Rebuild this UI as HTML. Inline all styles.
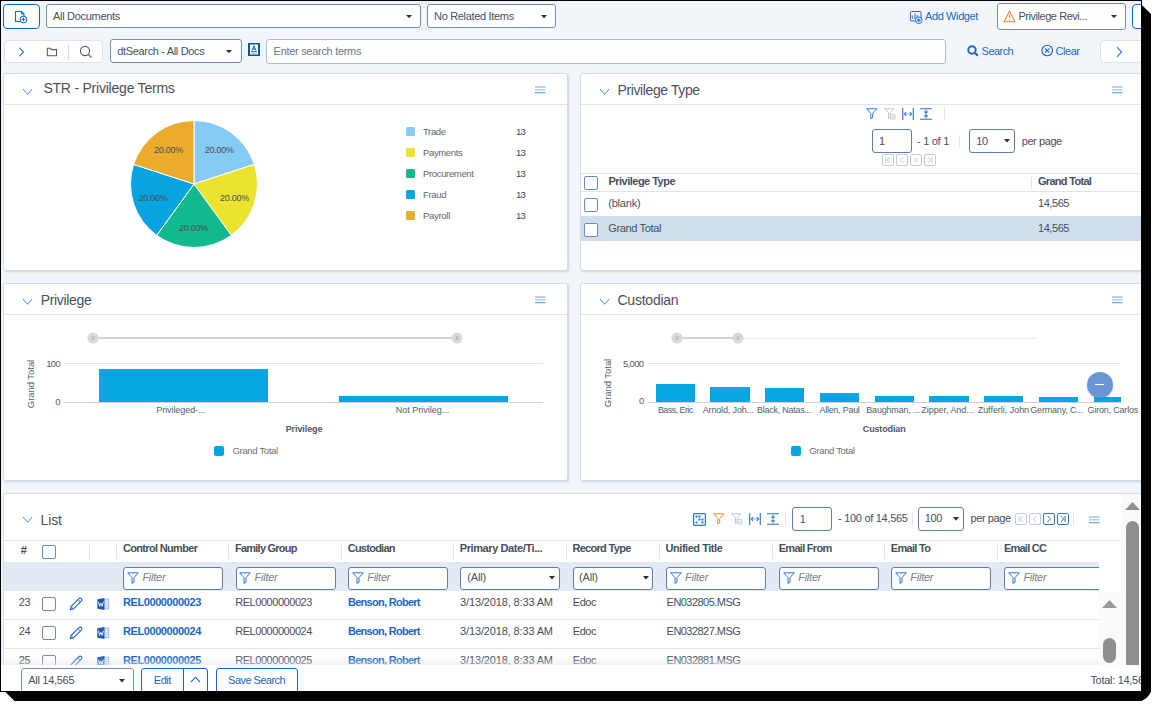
<!DOCTYPE html>
<html><head><meta charset="utf-8">
<style>
*{box-sizing:border-box;margin:0;padding:0}
html,body{width:1157px;height:707px;overflow:hidden;background:#fff}
body{position:relative;font-family:"Liberation Sans",sans-serif;color:#3d4654}
.a{position:absolute}
.t{position:absolute;white-space:nowrap;line-height:1}
#shadow{position:absolute;left:0;top:0;width:1157px;height:707px;background:#000;clip-path:polygon(1141.00px 5.50px,1142.50px 5.50px,1151.00px 14.00px,1151.00px 691.50px,1150.46px 692.51px,1149.81px 693.75px,1149.03px 694.94px,1148.15px 696.09px,1147.16px 697.16px,1146.09px 698.15px,1144.94px 699.03px,1143.75px 699.81px,1142.51px 700.46px,1141.50px 701.00px,14.50px 701.00px,5.50px 692.00px,5.50px 5.50px)}
#frame{position:absolute;left:0;top:0;width:1142px;height:692px;background:#000}
#app{position:absolute;left:0;top:0;width:1141px;height:691px;overflow:hidden;background:#f2f6fa}
.bt{position:absolute;left:0;top:0;width:1142px;height:1px;background:#000;z-index:50}
.bl{position:absolute;left:0;top:0;width:1px;height:692px;background:#000;z-index:50}
.sel{position:absolute;background:#fff;border:1px solid #7090bb;border-radius:3px}
.arr{position:absolute;width:0;height:0;border-left:3.5px solid transparent;border-right:3.5px solid transparent;border-top:4px solid #2b2f36}
.panel{position:absolute;background:#fff;border:1px solid #d3dde9;border-radius:3px;box-shadow:1px 1px 2px rgba(120,140,165,.35)}
.hl{position:absolute;height:1px;background:#dde6f0}
.vl{position:absolute;width:1px;background:#dde6f0}
.cb{position:absolute;width:14px;height:14px;border:1px solid #6a8cc0;border-radius:2px;background:#fff}
.inp{position:absolute;background:#fff;border:1px solid #5f7ea8;border-radius:3px}
.pg{position:absolute;width:12px;height:12px;border:1px solid #bccce0;border-radius:2px;background:#fff}
.pga{border-color:#2f7ad8}
</style></head><body>
<div id="shadow"></div>
<div id="frame"></div>
<div class="bt"></div><div class="bl"></div>
<div id="app">
<div class="a" style="left:3px;top:4px;width:37px;height:25px;border:1px solid #1266d6;border-radius:4px;background:#fff"></div>
<svg class="a" style="left:14px;top:10px" width="14" height="14" viewBox="0 0 14 14">
 <path d="M7.5 11.5H1.5V1.5H7.5L10 4V6" fill="none" stroke="#1769d6" stroke-width="1.1"/>
 <path d="M7.5 1.5V4H10" fill="none" stroke="#1769d6" stroke-width="1"/>
 <circle cx="9.5" cy="9.5" r="3.2" fill="#fff" stroke="#1769d6" stroke-width="1.1"/>
 <path d="M9.5 7.8V11.2M7.8 9.5H11.2" stroke="#1769d6" stroke-width="1.1"/>
</svg>
<div class="sel" style="left:46px;top:4px;width:375px;height:24px"></div>
<div class="t" style="left:53.00px;top:11.29px;font-size:11px;letter-spacing:-0.301px;color:#47505b">All Documents</div>
<svg class="a" style="left:406px;top:15px" width="6" height="3.2" viewBox="0 0 6 3.2"><path d="M0 0H6L3.0 3.2Z" fill="#2b2f36"/></svg>
<div class="sel" style="left:427px;top:4px;width:129px;height:24px"></div>
<div class="t" style="left:434.00px;top:11.29px;font-size:11px;letter-spacing:-0.318px;color:#47505b">No Related Items</div>
<svg class="a" style="left:541px;top:15px" width="6" height="3.2" viewBox="0 0 6 3.2"><path d="M0 0H6L3.0 3.2Z" fill="#2b2f36"/></svg>
<svg class="a" style="left:909px;top:10px" width="14" height="14" viewBox="0 0 14 14">
 <rect x="1.5" y="1.5" width="10.5" height="9.5" rx="1" fill="none" stroke="#1f6ad6" stroke-width="1"/>
 <path d="M3.6 9V5.6M6 9V3.6M8.4 9V5" stroke="#6f9fe3" stroke-width="1.6"/>
 <circle cx="9.8" cy="10.2" r="3.3" fill="#f2f6fa" stroke="#1f6ad6" stroke-width="1"/>
 <path d="M9.8 8.4V12M8 10.2H11.6" stroke="#1f6ad6" stroke-width="1.2"/>
</svg>
<div class="t" style="left:925.00px;top:11.29px;font-size:11px;letter-spacing:-0.386px;color:#1a66cc">Add Widget</div>
<div class="sel" style="left:997px;top:3px;width:129px;height:27px"></div>
<svg class="a" style="left:1003px;top:9.5px" width="13" height="13" viewBox="0 0 13 13">
 <path d="M6.5 1.2L12 11.8H1Z" fill="none" stroke="#e88a30" stroke-width="1.1" stroke-linejoin="round"/>
 <path d="M6.5 4.8V8.2M6.5 9.4V10.4" stroke="#e88a30" stroke-width="1.1"/>
</svg>
<div class="t" style="left:1018.40px;top:11.29px;font-size:11px;letter-spacing:-0.448px;color:#47505b">Privilege Revi...</div>
<svg class="a" style="left:1111px;top:15px" width="6" height="3.2" viewBox="0 0 6 3.2"><path d="M0 0H6L3.0 3.2Z" fill="#2b2f36"/></svg>
<div class="a" style="left:1132px;top:4px;width:30px;height:25px;border:1px solid #1266d6;border-radius:4px;background:#fff"></div>
<div class="a" style="left:4px;top:40px;width:99px;height:23px;border:1px solid #dbe4ee;border-radius:4px;background:#fff"></div>
<svg class="a" style="left:16px;top:45px" width="12" height="14" viewBox="0 0 12 14"><path d="M3.2 2.6L7.6 7L3.2 11.4" fill="none" stroke="#2f7ad8" stroke-width="1.1"/></svg>
<svg class="a" style="left:46px;top:46px" width="12" height="11" viewBox="0 0 12 11">
 <path d="M1.3 2.2H4.3L5.6 3.6H10.5V9.8H1.3Z" fill="none" stroke="#555b63" stroke-width="1.05" stroke-linejoin="round"/></svg>
<div class="a" style="left:68px;top:45px;width:1px;height:15px;background:#d5dde6"></div>
<svg class="a" style="left:79px;top:45px" width="14" height="14" viewBox="0 0 14 14">
 <circle cx="6" cy="6" r="4.6" fill="none" stroke="#555b63" stroke-width="1.1"/>
 <path d="M9.3 9.3L12.5 12.5" stroke="#555b63" stroke-width="1.1"/></svg>
<div class="sel" style="left:110px;top:39px;width:132px;height:24px"></div>
<div class="t" style="left:117.30px;top:46.29px;font-size:11px;letter-spacing:-0.339px;color:#47505b">dtSearch - All Docs</div>
<svg class="a" style="left:226px;top:50px" width="6" height="3.2" viewBox="0 0 6 3.2"><path d="M0 0H6L3.0 3.2Z" fill="#2b2f36"/></svg>
<svg class="a" style="left:248px;top:43px" width="12" height="13" viewBox="0 0 12 13">
 <rect x="0" y="0" width="12" height="13" fill="#0e5a95"/>
 <rect x="2" y="1.5" width="8" height="10" fill="#fff"/>
 <path d="M4 7.5L6 2.8L8 7.5M4.7 6H7.3" fill="none" stroke="#0e5a95" stroke-width="1"/>
 <path d="M3.2 8.6H8.8" stroke="#0e5a95" stroke-width="0.9"/>
 <path d="M3.2 10.3H8.8" stroke="#8fb0cc" stroke-width="0.9"/></svg>
<div class="a" style="left:266px;top:39px;width:680px;height:25px;border:1px solid #a9bdd4;border-radius:3px;background:#fff"></div>
<div class="t" style="left:273.60px;top:46.29px;font-size:11px;letter-spacing:-0.296px;color:#6f757c">Enter search terms</div>
<svg class="a" style="left:967px;top:45px" width="12" height="12" viewBox="0 0 12 12">
 <circle cx="5" cy="5" r="3.7" fill="none" stroke="#1a66cc" stroke-width="2"/>
 <path d="M7.5 7.5L10.8 10.8" stroke="#1a66cc" stroke-width="2.2"/></svg>
<div class="t" style="left:981.60px;top:46.29px;font-size:11px;letter-spacing:-0.542px;color:#1a66cc">Search</div>
<svg class="a" style="left:1041px;top:44px" width="13" height="13" viewBox="0 0 13 13">
 <circle cx="6.2" cy="6.5" r="5.3" fill="none" stroke="#1a66cc" stroke-width="1.1"/>
 <path d="M4 4.3L8.4 8.7M8.4 4.3L4 8.7" stroke="#1a66cc" stroke-width="1.1"/></svg>
<div class="t" style="left:1055.50px;top:46.29px;font-size:11px;letter-spacing:-0.457px;color:#1a66cc">Clear</div>
<div class="a" style="left:1100px;top:40px;width:60px;height:23px;border:1px solid #dbe4ee;border-radius:4px;background:#fff"></div>
<svg class="a" style="left:1114px;top:45px" width="10" height="14" viewBox="0 0 10 14"><path d="M3 2.2L7.6 7L3 11.8" fill="none" stroke="#2f7ad8" stroke-width="1.1"/></svg>
<div class="panel" style="left:3px;top:73px;width:565px;height:198px"></div>
<div class="hl" style="left:4px;top:104px;width:563px"></div>
<svg class="a" style="left:22px;top:87.7px" width="11.2" height="7.3" viewBox="0 0 11.2 7.3"><path d="M1 1L5.6 6.3L10.2 1" fill="none" stroke="#3a8ae0" stroke-width="1"/></svg>
<div class="t" style="left:43.40px;top:80.95px;font-size:14px;letter-spacing:-0.221px;color:#4a515c">STR - Privilege Terms</div>
<svg class="a" style="left:535px;top:86px" width="10.5" height="9" viewBox="0 0 10.5 9"><path d="M0 1H10.5M0 6.6H10.5" stroke="#74a8df" stroke-width="1.2"/><path d="M0 3.8H10.5" stroke="#74a8df" stroke-opacity="0.7" stroke-width="1.2"/></svg>
<svg class="a" style="left:0;top:0" width="600" height="300" viewBox="0 0 600 300"><path d="M194 184L194.00 120.50A63.5 63.5 0 0 1 254.39 164.38Z" fill="#86cbf3" stroke="#fff" stroke-width="1"/><path d="M194 184L254.39 164.38A63.5 63.5 0 0 1 231.32 235.37Z" fill="#ebe32f" stroke="#fff" stroke-width="1"/><path d="M194 184L231.32 235.37A63.5 63.5 0 0 1 156.68 235.37Z" fill="#12b98d" stroke="#fff" stroke-width="1"/><path d="M194 184L156.68 235.37A63.5 63.5 0 0 1 133.61 164.38Z" fill="#08a3e1" stroke="#fff" stroke-width="1"/><path d="M194 184L133.61 164.38A63.5 63.5 0 0 1 194.00 120.50Z" fill="#ebab2d" stroke="#fff" stroke-width="1"/></svg>
<div class="t" style="left:204.70px;top:146.08px;font-size:9px;letter-spacing:-0.254px;color:#4a4f57">20.00%</div>
<div class="t" style="left:220.10px;top:194.18px;font-size:9px;letter-spacing:-0.254px;color:#4a4f57">20.00%</div>
<div class="t" style="left:179.10px;top:223.88px;font-size:9px;letter-spacing:-0.254px;color:#4a4f57">20.00%</div>
<div class="t" style="left:138.50px;top:194.18px;font-size:9px;letter-spacing:-0.254px;color:#4a4f57">20.00%</div>
<div class="t" style="left:153.90px;top:146.08px;font-size:9px;letter-spacing:-0.254px;color:#4a4f57">20.00%</div>
<div class="a" style="left:406px;top:127.2px;width:9px;height:8.5px;border-radius:1.5px;background:#86cbf3"></div>
<div class="t" style="left:423.00px;top:127.36px;font-size:9.5px;letter-spacing:-0.343px;color:#5f6670">Trade</div>
<div class="t" style="left:516.00px;top:127.36px;font-size:9.5px;letter-spacing:-0.883px;color:#3d4654">13</div>
<div class="a" style="left:406px;top:148.2px;width:9px;height:8.5px;border-radius:1.5px;background:#ebe32f"></div>
<div class="t" style="left:423.00px;top:148.36px;font-size:9.5px;letter-spacing:-0.370px;color:#5f6670">Payments</div>
<div class="t" style="left:516.00px;top:148.36px;font-size:9.5px;letter-spacing:-0.883px;color:#3d4654">13</div>
<div class="a" style="left:406px;top:169.2px;width:9px;height:8.5px;border-radius:1.5px;background:#12b98d"></div>
<div class="t" style="left:423.00px;top:169.36px;font-size:9.5px;letter-spacing:-0.346px;color:#5f6670">Procurement</div>
<div class="t" style="left:516.00px;top:169.36px;font-size:9.5px;letter-spacing:-0.883px;color:#3d4654">13</div>
<div class="a" style="left:406px;top:190.2px;width:9px;height:8.5px;border-radius:1.5px;background:#08a3e1"></div>
<div class="t" style="left:423.00px;top:190.36px;font-size:9.5px;letter-spacing:-0.347px;color:#5f6670">Fraud</div>
<div class="t" style="left:516.00px;top:190.36px;font-size:9.5px;letter-spacing:-0.883px;color:#3d4654">13</div>
<div class="a" style="left:406px;top:211.2px;width:9px;height:8.5px;border-radius:1.5px;background:#ebab2d"></div>
<div class="t" style="left:423.00px;top:211.36px;font-size:9.5px;letter-spacing:-0.290px;color:#5f6670">Payroll</div>
<div class="t" style="left:516.00px;top:211.36px;font-size:9.5px;letter-spacing:-0.883px;color:#3d4654">13</div>
<div class="panel" style="left:580px;top:73px;width:600px;height:198px"></div>
<div class="hl" style="left:581px;top:104px;width:600px"></div>
<svg class="a" style="left:599px;top:87.5px" width="11.2" height="7.3" viewBox="0 0 11.2 7.3"><path d="M1 1L5.6 6.3L10.2 1" fill="none" stroke="#3a8ae0" stroke-width="1"/></svg>
<div class="t" style="left:617.50px;top:82.95px;font-size:14px;letter-spacing:-0.388px;color:#4a515c">Privilege Type</div>
<svg class="a" style="left:1112px;top:86px" width="10.5" height="9" viewBox="0 0 10.5 9"><path d="M0 1H10.5M0 6.6H10.5" stroke="#74a8df" stroke-width="1.2"/><path d="M0 3.8H10.5" stroke="#74a8df" stroke-opacity="0.7" stroke-width="1.2"/></svg>
<svg class="a" style="left:866px;top:108px" width="11.5" height="11.5" viewBox="0 0 12 12"><path d="M0.7 0.8H11.3L7 5.6V10.2L5 11.4V5.6Z" fill="none" stroke="#2f73d0" stroke-width="1.0" stroke-linejoin="round"/></svg>
<svg class="a" style="left:884px;top:108px" width="12" height="12" viewBox="0 0 12 12"><path d="M0.7 0.8H9.8L6.3 4.8V9.5L4.5 10.5V4.8Z" fill="none" stroke="#b8c4d2" stroke-width="0.9" stroke-linejoin="round"/><circle cx="8.8" cy="8.8" r="2.6" fill="#fff" stroke="#b8c4d2" stroke-width="0.9"/><path d="M7.8 7.8L9.8 9.8M9.8 7.8L7.8 9.8" stroke="#b8c4d2" stroke-width="0.8"/></svg>
<svg class="a" style="left:902px;top:108px" width="12" height="12" viewBox="0 0 12 12"><path d="M0.7 0V12M11.3 0V12" stroke="#2f73d0" stroke-width="1.1"/><path d="M3.5 6H8.5" stroke="#8fb4e6" stroke-width="1"/><path d="M4.2 4.2L2.4 6L4.2 7.8M7.8 4.2L9.6 6L7.8 7.8" fill="none" stroke="#2f73d0" stroke-width="1.1"/></svg>
<svg class="a" style="left:920px;top:108px" width="12" height="12" viewBox="0 0 12 12"><path d="M0 0.7H12M0 11.3H12" stroke="#2f73d0" stroke-width="1.1"/><path d="M6 1.5V5M6 10.5V7" stroke="#2f73d0" stroke-width="0.9"/><path d="M4.3 3.4L6 5.1L7.7 3.4M4.3 8.6L6 6.9L7.7 8.6" fill="none" stroke="#2f73d0" stroke-width="1.1"/></svg>
<div class="vl" style="left:944px;top:108px;height:12px"></div>
<div class="inp" style="left:872px;top:129px;width:40px;height:24px"></div>
<div class="t" style="left:879.00px;top:135.89px;font-size:11px;letter-spacing:-1.618px;color:#47505b">1</div>
<div class="t" style="left:917.00px;top:135.69px;font-size:11px;letter-spacing:-0.280px;color:#47505b">- 1 of 1</div>
<div class="vl" style="left:959px;top:135px;height:12px"></div>
<div class="inp" style="left:969px;top:129px;width:46px;height:24px"></div>
<div class="t" style="left:976.20px;top:135.69px;font-size:11px;letter-spacing:-0.418px;color:#47505b">10</div>
<svg class="a" style="left:1004px;top:139px" width="6" height="3.5" viewBox="0 0 6 3.5"><path d="M0 0H6L3.0 3.5Z" fill="#2b2f36"/></svg>
<div class="t" style="left:1021.70px;top:135.69px;font-size:11px;letter-spacing:-0.416px;color:#47505b">per page</div>
<svg class="a" style="left:882px;top:154px" width="12" height="12" viewBox="0 0 12 12"><rect x="0.5" y="0.5" width="11" height="11" rx="1.5" fill="#fff" stroke="#bfcde0" stroke-width="1"/><path d="M4 3V9M8 3L5.3 6L8 9" fill="none" stroke="#bfcde0" stroke-width="1"/></svg>
<svg class="a" style="left:896px;top:154px" width="12" height="12" viewBox="0 0 12 12"><rect x="0.5" y="0.5" width="11" height="11" rx="1.5" fill="#fff" stroke="#bfcde0" stroke-width="1"/><path d="M7.3 3L4.6 6L7.3 9" fill="none" stroke="#bfcde0" stroke-width="1"/></svg>
<svg class="a" style="left:910px;top:154px" width="12" height="12" viewBox="0 0 12 12"><rect x="0.5" y="0.5" width="11" height="11" rx="1.5" fill="#fff" stroke="#bfcde0" stroke-width="1"/><path d="M4.7 3L7.4 6L4.7 9" fill="none" stroke="#bfcde0" stroke-width="1"/></svg>
<svg class="a" style="left:924px;top:154px" width="12" height="12" viewBox="0 0 12 12"><rect x="0.5" y="0.5" width="11" height="11" rx="1.5" fill="#fff" stroke="#bfcde0" stroke-width="1"/><path d="M4 3L6.7 6L4 9M8 3V9" fill="none" stroke="#bfcde0" stroke-width="1"/></svg>
<div class="hl" style="left:581px;top:173px;width:600px"></div>
<div class="hl" style="left:581px;top:191px;width:600px"></div>
<div class="a" style="left:581px;top:216px;width:600px;height:25px;background:#d0deec"></div>
<div class="cb" style="left:584px;top:176px"></div>
<div class="cb" style="left:584px;top:198px"></div>
<div class="cb" style="left:584px;top:223px"></div>
<div class="t" style="left:608.50px;top:176.29px;font-size:11px;letter-spacing:-0.519px;color:#46505e;font-weight:bold">Privilege Type</div>
<div class="t" style="left:608.20px;top:197.99px;font-size:11px;letter-spacing:-0.203px;color:#47505b">(blank)</div>
<div class="t" style="left:608.20px;top:222.99px;font-size:11px;letter-spacing:-0.333px;color:#47505b">Grand Total</div>
<div class="vl" style="left:1031px;top:177px;height:11px"></div>
<div class="t" style="left:1038.00px;top:176.29px;font-size:11px;letter-spacing:-0.701px;color:#46505e;font-weight:bold">Grand Total</div>
<div class="t" style="left:1038.00px;top:197.99px;font-size:11px;letter-spacing:-0.441px;color:#47505b">14,565</div>
<div class="t" style="left:1038.00px;top:222.99px;font-size:11px;letter-spacing:-0.441px;color:#47505b">14,565</div>
<div class="panel" style="left:3px;top:283px;width:565px;height:198px"></div>
<div class="hl" style="left:4px;top:314px;width:563px"></div>
<svg class="a" style="left:22px;top:297.5px" width="11.2" height="7.3" viewBox="0 0 11.2 7.3"><path d="M1 1L5.6 6.3L10.2 1" fill="none" stroke="#3a8ae0" stroke-width="1"/></svg>
<div class="t" style="left:40.70px;top:293.15px;font-size:14px;letter-spacing:-0.321px;color:#4a515c">Privilege</div>
<svg class="a" style="left:535px;top:296px" width="10.5" height="9" viewBox="0 0 10.5 9"><path d="M0 1H10.5M0 6.6H10.5" stroke="#74a8df" stroke-width="1.2"/><path d="M0 3.8H10.5" stroke="#74a8df" stroke-opacity="0.7" stroke-width="1.2"/></svg>
<div class="a" style="left:93px;top:337px;width:364px;height:2px;background:#d2d2d2"></div>
<svg class="a" style="left:86.6px;top:332px" width="12" height="12" viewBox="0 0 12 12"><circle cx="6" cy="6" r="5.6" fill="#d9d9d9"/><path d="M5.3 4V8M6.7 4V8" stroke="#a8a8a8" stroke-width="0.7"/></svg>
<svg class="a" style="left:451.3px;top:332px" width="12" height="12" viewBox="0 0 12 12"><circle cx="6" cy="6" r="5.6" fill="#d9d9d9"/><path d="M5.3 4V8M6.7 4V8" stroke="#a8a8a8" stroke-width="0.7"/></svg>
<div class="a" style="left:64px;top:363px;width:479px;height:1px;background:#e3e3e3"></div>
<div class="a" style="left:64px;top:402px;width:479px;height:1px;background:#d0d0d0"></div>
<div class="a" style="left:99.3px;top:368.6px;width:169px;height:33.6px;background:#05a6e2"></div>
<div class="a" style="left:339.4px;top:395.8px;width:168.4px;height:6.4px;background:#05a6e2"></div>
<div class="t" style="left:46.20px;top:358.86px;font-size:9.5px;letter-spacing:-0.683px;color:#555d69">100</div>
<div class="t" style="left:55.20px;top:396.86px;font-size:9.5px;letter-spacing:-0.483px;color:#555d69">0</div>
<div class="t" style="left:5.5px;top:378.5px;width:50px;height:10px;font-size:9.5px;line-height:10px;text-align:center;transform:rotate(-90deg);color:#555d69;letter-spacing:-0.05px">Grand Total</div>
<div class="t" style="left:156.35px;top:406.08px;font-size:9px;letter-spacing:-0.080px;color:#555d69">Privileged-...</div>
<div class="t" style="left:395.75px;top:406.08px;font-size:9px;letter-spacing:-0.001px;color:#555d69">Not Privileg...</div>
<div class="t" style="left:285.70px;top:425.28px;font-size:9px;letter-spacing:-0.091px;color:#4e5663;font-weight:bold">Privilege</div>
<div class="a" style="left:214.3px;top:446px;width:10px;height:9.5px;background:#05a6e2;border-radius:2px"></div>
<div class="t" style="left:232.50px;top:445.96px;font-size:9.5px;letter-spacing:-0.328px;color:#6a717b">Grand Total</div>
<div class="panel" style="left:580px;top:283px;width:600px;height:198px"></div>
<div class="hl" style="left:581px;top:314px;width:600px"></div>
<svg class="a" style="left:599px;top:297.5px" width="11.2" height="7.3" viewBox="0 0 11.2 7.3"><path d="M1 1L5.6 6.3L10.2 1" fill="none" stroke="#3a8ae0" stroke-width="1"/></svg>
<div class="t" style="left:617.50px;top:293.15px;font-size:14px;letter-spacing:-0.238px;color:#4a515c">Custodian</div>
<svg class="a" style="left:1112px;top:296px" width="10.5" height="9" viewBox="0 0 10.5 9"><path d="M0 1H10.5M0 6.6H10.5" stroke="#74a8df" stroke-width="1.2"/><path d="M0 3.8H10.5" stroke="#74a8df" stroke-opacity="0.7" stroke-width="1.2"/></svg>
<div class="a" style="left:738px;top:337.5px;width:298px;height:1px;background:#ececec"></div>
<div class="a" style="left:676px;top:337px;width:62px;height:2px;background:#d2d2d2"></div>
<svg class="a" style="left:670.5px;top:332px" width="12" height="12" viewBox="0 0 12 12"><circle cx="6" cy="6" r="5.6" fill="#d9d9d9"/><path d="M5.3 4V8M6.7 4V8" stroke="#a8a8a8" stroke-width="0.7"/></svg>
<svg class="a" style="left:732.3px;top:332px" width="12" height="12" viewBox="0 0 12 12"><circle cx="6" cy="6" r="5.6" fill="#d9d9d9"/><path d="M5.3 4V8M6.7 4V8" stroke="#a8a8a8" stroke-width="0.7"/></svg>
<div class="a" style="left:647.6px;top:363px;width:473px;height:1px;background:#e3e3e3"></div>
<div class="a" style="left:647.6px;top:402px;width:473px;height:1px;background:#d0d0d0"></div>
<div class="a" style="left:647px;top:340px;width:474px;height:63px;overflow:hidden">
<div class="a" style="left:8.50px;top:43.70px;width:39.4px;height:18.50px;background:#05a6e2"></div>
<div class="a" style="left:63.26px;top:47.10px;width:39.4px;height:15.10px;background:#05a6e2"></div>
<div class="a" style="left:118.02px;top:47.50px;width:39.4px;height:14.70px;background:#05a6e2"></div>
<div class="a" style="left:172.78px;top:52.90px;width:39.4px;height:9.30px;background:#05a6e2"></div>
<div class="a" style="left:227.54px;top:55.80px;width:39.4px;height:6.40px;background:#05a6e2"></div>
<div class="a" style="left:282.30px;top:55.80px;width:39.4px;height:6.40px;background:#05a6e2"></div>
<div class="a" style="left:337.06px;top:56.40px;width:39.4px;height:5.80px;background:#05a6e2"></div>
<div class="a" style="left:391.82px;top:57.00px;width:39.4px;height:5.20px;background:#05a6e2"></div>
<div class="a" style="left:446.58px;top:57.30px;width:39.4px;height:4.90px;background:#05a6e2"></div>
</div>
<div class="t" style="left:657.90px;top:406.08px;font-size:9px;letter-spacing:-0.571px;color:#555d69">Bass, Eric</div>
<div class="t" style="left:702.70px;top:406.08px;font-size:9px;letter-spacing:-0.145px;color:#555d69">Arnold, Joh...</div>
<div class="t" style="left:757.10px;top:406.08px;font-size:9px;letter-spacing:-0.261px;color:#555d69">Black, Natas...</div>
<div class="t" style="left:819.50px;top:406.08px;font-size:9px;letter-spacing:-0.266px;color:#555d69">Allen, Paul</div>
<div class="t" style="left:866.30px;top:406.08px;font-size:9px;letter-spacing:-0.195px;color:#555d69">Baughman, ...</div>
<div class="t" style="left:921.30px;top:406.08px;font-size:9px;letter-spacing:-0.052px;color:#555d69">Zipper, And...</div>
<div class="t" style="left:977.70px;top:406.08px;font-size:9px;letter-spacing:-0.033px;color:#555d69">Zufferli, John</div>
<div class="t" style="left:1030.30px;top:406.08px;font-size:9px;letter-spacing:-0.196px;color:#555d69">Germany, C...</div>
<div class="t" style="left:1087.60px;top:406.08px;font-size:9px;letter-spacing:-0.194px;color:#555d69">Giron, Carlos</div>
<div class="t" style="left:622.90px;top:358.86px;font-size:9.5px;letter-spacing:-0.635px;color:#555d69">5,000</div>
<div class="t" style="left:639.00px;top:396.36px;font-size:9.5px;letter-spacing:-0.783px;color:#555d69">0</div>
<div class="t" style="left:582.7px;top:378.3px;width:50px;height:10px;font-size:9.5px;line-height:10px;text-align:center;transform:rotate(-90deg);color:#555d69;letter-spacing:-0.05px">Grand Total</div>
<div class="t" style="left:862.80px;top:425.28px;font-size:9px;letter-spacing:-0.144px;color:#4e5663;font-weight:bold">Custodian</div>
<div class="a" style="left:791.3px;top:446px;width:10px;height:9.5px;background:#05a6e2;border-radius:2px"></div>
<div class="t" style="left:809.30px;top:445.96px;font-size:9.5px;letter-spacing:-0.328px;color:#6a717b">Grand Total</div>
<div class="a" style="left:1086.5px;top:371.5px;width:26px;height:26px;border-radius:50%;background:#6a96d6;box-shadow:0 1px 2px rgba(0,0,0,.15)"></div>
<div class="a" style="left:1095px;top:384px;width:9px;height:1.3px;background:#fff"></div>
<div class="panel" style="left:3px;top:493px;width:1200px;height:300px"></div>
<svg class="a" style="left:21.5px;top:516px" width="11.2" height="7.3" viewBox="0 0 11.2 7.3"><path d="M1 1L5.6 6.3L10.2 1" fill="none" stroke="#3a8ae0" stroke-width="1"/></svg>
<div class="t" style="left:40.50px;top:513.05px;font-size:14px;letter-spacing:-0.122px;color:#4a515c">List</div>
<svg class="a" style="left:693px;top:512.5px" width="13" height="13" viewBox="0 0 13 13">
 <rect x="0.6" y="0.6" width="11.8" height="11.8" rx="1" fill="none" stroke="#2f73d0" stroke-width="1.2"/>
 <rect x="2.5" y="2.5" width="2" height="2" fill="#2f73d0"/><rect x="5.5" y="2.5" width="2" height="2" fill="#2f73d0"/>
 <rect x="8.5" y="5.5" width="2" height="2" fill="#2f73d0"/><rect x="2.5" y="8.5" width="2" height="2" fill="#2f73d0"/>
 <rect x="8.5" y="8.5" width="2" height="2" fill="#2f73d0"/><rect x="5.5" y="5.5" width="2" height="2" fill="#2f73d0"/>
</svg>
<svg class="a" style="left:713px;top:513px" width="11.5" height="11.5" viewBox="0 0 12 12"><path d="M0.7 0.8H11.3L7 5.6V10.2L5 11.4V5.6Z" fill="none" stroke="#e8892e" stroke-width="1.0" stroke-linejoin="round"/></svg>
<svg class="a" style="left:731px;top:513px" width="12" height="12" viewBox="0 0 12 12"><path d="M0.7 0.8H9.8L6.3 4.8V9.5L4.5 10.5V4.8Z" fill="none" stroke="#b8c4d2" stroke-width="0.9" stroke-linejoin="round"/><circle cx="8.8" cy="8.8" r="2.6" fill="#fff" stroke="#b8c4d2" stroke-width="0.9"/><path d="M7.8 7.8L9.8 9.8M9.8 7.8L7.8 9.8" stroke="#b8c4d2" stroke-width="0.8"/></svg>
<svg class="a" style="left:749px;top:513px" width="12" height="12" viewBox="0 0 12 12"><path d="M0.7 0V12M11.3 0V12" stroke="#2f73d0" stroke-width="1.1"/><path d="M3.5 6H8.5" stroke="#8fb4e6" stroke-width="1"/><path d="M4.2 4.2L2.4 6L4.2 7.8M7.8 4.2L9.6 6L7.8 7.8" fill="none" stroke="#2f73d0" stroke-width="1.1"/></svg>
<svg class="a" style="left:767px;top:513px" width="12" height="12" viewBox="0 0 12 12"><path d="M0 0.7H12M0 11.3H12" stroke="#2f73d0" stroke-width="1.1"/><path d="M6 1.5V5M6 10.5V7" stroke="#2f73d0" stroke-width="0.9"/><path d="M4.3 3.4L6 5.1L7.7 3.4M4.3 8.6L6 6.9L7.7 8.6" fill="none" stroke="#2f73d0" stroke-width="1.1"/></svg>
<div class="vl" style="left:785px;top:513px;height:12px"></div>
<div class="inp" style="left:792px;top:507px;width:40px;height:24px"></div>
<div class="t" style="left:799.70px;top:513.89px;font-size:11px;letter-spacing:-1.618px;color:#47505b">1</div>
<div class="t" style="left:838.10px;top:513.29px;font-size:11px;letter-spacing:-0.300px;color:#47505b">- 100 of 14,565</div>
<div class="vl" style="left:912px;top:513px;height:12px"></div>
<div class="inp" style="left:918px;top:507px;width:46px;height:24px"></div>
<div class="t" style="left:924.70px;top:513.29px;font-size:11px;letter-spacing:-0.351px;color:#47505b">100</div>
<svg class="a" style="left:953px;top:517px" width="6" height="3.7" viewBox="0 0 6 3.7"><path d="M0 0H6L3.0 3.7Z" fill="#2b2f36"/></svg>
<div class="t" style="left:970.50px;top:513.29px;font-size:11px;letter-spacing:-0.416px;color:#47505b">per page</div>
<svg class="a" style="left:1015px;top:513px" width="12" height="12" viewBox="0 0 12 12"><rect x="0.5" y="0.5" width="11" height="11" rx="1.5" fill="#fff" stroke="#bfcde0" stroke-width="1"/><path d="M4 3V9M8 3L5.3 6L8 9" fill="none" stroke="#bfcde0" stroke-width="1"/></svg>
<svg class="a" style="left:1029px;top:513px" width="12" height="12" viewBox="0 0 12 12"><rect x="0.5" y="0.5" width="11" height="11" rx="1.5" fill="#fff" stroke="#bfcde0" stroke-width="1"/><path d="M7.3 3L4.6 6L7.3 9" fill="none" stroke="#bfcde0" stroke-width="1"/></svg>
<svg class="a" style="left:1043px;top:513px" width="12" height="12" viewBox="0 0 12 12"><rect x="0.5" y="0.5" width="11" height="11" rx="1.5" fill="#fff" stroke="#2f73d0" stroke-width="1"/><path d="M4.7 3L7.4 6L4.7 9" fill="none" stroke="#2f73d0" stroke-width="1"/></svg>
<svg class="a" style="left:1057px;top:513px" width="12" height="12" viewBox="0 0 12 12"><rect x="0.5" y="0.5" width="11" height="11" rx="1.5" fill="#fff" stroke="#2f73d0" stroke-width="1"/><path d="M4 3L6.7 6L4 9M8 3V9" fill="none" stroke="#2f73d0" stroke-width="1"/></svg>
<div class="vl" style="left:1073px;top:513px;height:12px"></div>
<svg class="a" style="left:1089px;top:516px" width="10.5" height="9" viewBox="0 0 10.5 9"><path d="M0 1H10.5M0 6.6H10.5" stroke="#74a8df" stroke-width="1.2"/><path d="M0 3.8H10.5" stroke="#74a8df" stroke-opacity="0.7" stroke-width="1.2"/></svg>
<div class="hl" style="left:4px;top:540px;width:1117px"></div>
<div class="a" style="left:4px;top:562px;width:1095px;height:29px;background:#e2eaf3"></div>
<div class="t" style="left:20.70px;top:545.09px;font-size:11px;letter-spacing:-0.118px;color:#46505e;font-weight:bold">#</div>
<div class="cb" style="left:42px;top:545px"></div>
<div class="vl" style="left:89.1px;top:544px;height:15px"></div>
<div class="vl" style="left:116.1px;top:544px;height:15px"></div>
<div class="vl" style="left:228.2px;top:544px;height:15px"></div>
<div class="vl" style="left:340.9px;top:544px;height:15px"></div>
<div class="vl" style="left:453.0px;top:544px;height:15px"></div>
<div class="vl" style="left:565.6px;top:544px;height:15px"></div>
<div class="vl" style="left:658.8px;top:544px;height:15px"></div>
<div class="vl" style="left:771.9px;top:544px;height:15px"></div>
<div class="vl" style="left:884.0px;top:544px;height:15px"></div>
<div class="vl" style="left:997.1px;top:544px;height:15px"></div>
<div class="t" style="left:122.90px;top:543.29px;font-size:11px;letter-spacing:-0.659px;color:#46505e;font-weight:bold">Control Number</div>
<div class="t" style="left:235.00px;top:543.29px;font-size:11px;letter-spacing:-0.767px;color:#46505e;font-weight:bold">Family Group</div>
<div class="t" style="left:347.70px;top:543.29px;font-size:11px;letter-spacing:-0.742px;color:#46505e;font-weight:bold">Custodian</div>
<div class="t" style="left:459.80px;top:543.29px;font-size:11px;letter-spacing:-0.409px;color:#46505e;font-weight:bold">Primary Date/Ti...</div>
<div class="t" style="left:572.40px;top:543.29px;font-size:11px;letter-spacing:-0.692px;color:#46505e;font-weight:bold">Record Type</div>
<div class="t" style="left:665.60px;top:543.29px;font-size:11px;letter-spacing:-0.465px;color:#46505e;font-weight:bold">Unified Title</div>
<div class="t" style="left:778.70px;top:543.29px;font-size:11px;letter-spacing:-0.710px;color:#46505e;font-weight:bold">Email From</div>
<div class="t" style="left:890.80px;top:543.29px;font-size:11px;letter-spacing:-0.703px;color:#46505e;font-weight:bold">Email To</div>
<div class="t" style="left:1003.90px;top:543.29px;font-size:11px;letter-spacing:-0.761px;color:#46505e;font-weight:bold">Email CC</div>
<div class="a" style="left:4px;top:540px;width:1095px;height:151px;overflow:hidden">
</div>
<div class="inp" style="left:123.4px;top:566.5px;width:100px;height:23px"></div>
<svg class="a" style="left:126.99999999999999px;top:572px" width="12" height="12" viewBox="0 0 12 12"><path d="M0.7 0.8H11.3L7 5.6V10.2L5 11.4V5.6Z" fill="none" stroke="#2f73d0" stroke-width="1.0" stroke-linejoin="round"/></svg>
<div class="t" style="left:142.40px;top:571.99px;font-size:11px;letter-spacing:-0.241px;color:#7b8189;font-style:italic">Filter</div>
<div class="inp" style="left:235.5px;top:566.5px;width:100px;height:23px"></div>
<svg class="a" style="left:239.1px;top:572px" width="12" height="12" viewBox="0 0 12 12"><path d="M0.7 0.8H11.3L7 5.6V10.2L5 11.4V5.6Z" fill="none" stroke="#2f73d0" stroke-width="1.0" stroke-linejoin="round"/></svg>
<div class="t" style="left:254.50px;top:571.99px;font-size:11px;letter-spacing:-0.241px;color:#7b8189;font-style:italic">Filter</div>
<div class="inp" style="left:348.2px;top:566.5px;width:100px;height:23px"></div>
<svg class="a" style="left:351.8px;top:572px" width="12" height="12" viewBox="0 0 12 12"><path d="M0.7 0.8H11.3L7 5.6V10.2L5 11.4V5.6Z" fill="none" stroke="#2f73d0" stroke-width="1.0" stroke-linejoin="round"/></svg>
<div class="t" style="left:367.20px;top:571.99px;font-size:11px;letter-spacing:-0.241px;color:#7b8189;font-style:italic">Filter</div>
<div class="inp" style="left:460.3px;top:566.5px;width:100px;height:23px"></div>
<div class="t" style="left:467.30px;top:572.29px;font-size:11px;letter-spacing:-0.190px;color:#47505b">(All)</div>
<svg class="a" style="left:549.3px;top:576.3px" width="6" height="3.5" viewBox="0 0 6 3.5"><path d="M0 0H6L3.0 3.5Z" fill="#2b2f36"/></svg>
<div class="inp" style="left:572.9px;top:566.5px;width:80.5px;height:23px"></div>
<div class="t" style="left:579.10px;top:572.29px;font-size:11px;letter-spacing:-0.190px;color:#47505b">(All)</div>
<svg class="a" style="left:642.6px;top:576.3px" width="6" height="3.5" viewBox="0 0 6 3.5"><path d="M0 0H6L3.0 3.5Z" fill="#2b2f36"/></svg>
<div class="inp" style="left:666.1px;top:566.5px;width:100px;height:23px"></div>
<svg class="a" style="left:669.6999999999999px;top:572px" width="12" height="12" viewBox="0 0 12 12"><path d="M0.7 0.8H11.3L7 5.6V10.2L5 11.4V5.6Z" fill="none" stroke="#2f73d0" stroke-width="1.0" stroke-linejoin="round"/></svg>
<div class="t" style="left:685.10px;top:571.99px;font-size:11px;letter-spacing:-0.241px;color:#7b8189;font-style:italic">Filter</div>
<div class="inp" style="left:779.2px;top:566.5px;width:100px;height:23px"></div>
<svg class="a" style="left:782.8px;top:572px" width="12" height="12" viewBox="0 0 12 12"><path d="M0.7 0.8H11.3L7 5.6V10.2L5 11.4V5.6Z" fill="none" stroke="#2f73d0" stroke-width="1.0" stroke-linejoin="round"/></svg>
<div class="t" style="left:798.20px;top:571.99px;font-size:11px;letter-spacing:-0.241px;color:#7b8189;font-style:italic">Filter</div>
<div class="inp" style="left:891.3px;top:566.5px;width:100px;height:23px"></div>
<svg class="a" style="left:894.9px;top:572px" width="12" height="12" viewBox="0 0 12 12"><path d="M0.7 0.8H11.3L7 5.6V10.2L5 11.4V5.6Z" fill="none" stroke="#2f73d0" stroke-width="1.0" stroke-linejoin="round"/></svg>
<div class="t" style="left:910.30px;top:571.99px;font-size:11px;letter-spacing:-0.241px;color:#7b8189;font-style:italic">Filter</div>
<div class="inp" style="left:1004.4px;top:566.5px;width:100px;height:23px"></div>
<svg class="a" style="left:1008.0px;top:572px" width="12" height="12" viewBox="0 0 12 12"><path d="M0.7 0.8H11.3L7 5.6V10.2L5 11.4V5.6Z" fill="none" stroke="#2f73d0" stroke-width="1.0" stroke-linejoin="round"/></svg>
<div class="t" style="left:1023.40px;top:571.99px;font-size:11px;letter-spacing:-0.241px;color:#7b8189;font-style:italic">Filter</div>
<div class="t" style="left:18.70px;top:597.29px;font-size:11px;letter-spacing:-0.218px;color:#47505b">23</div>
<div class="cb" style="left:42px;top:597.0px"></div>
<svg class="a" style="left:69px;top:597.0px" width="14" height="14" viewBox="0 0 14 14"><path d="M1.3 12.7L2.1 9.5L9.9 1.7Q11.2 0.6 12.4 1.6Q13.4 2.8 12.3 4.1L4.5 11.9Z" fill="none" stroke="#2569d2" stroke-width="1.1" stroke-linejoin="round"/><path d="M9 2.7L11.3 5M2.1 9.5L4.5 11.9" fill="none" stroke="#2569d2" stroke-width="1"/><path d="M1.3 12.7L1.8 10.8L3.2 12.2Z" fill="#2569d2"/></svg>
<svg class="a" style="left:96.5px;top:597.6px" width="13" height="12" viewBox="0 0 13 12"><rect x="6.2" y="1.2" width="5.6" height="9.6" fill="#fff" stroke="#7aa6da" stroke-width="0.8"/><path d="M7.5 3.2H11M7.5 5.2H11M7.5 7.2H11M7.5 9.1H11" stroke="#8ab0de" stroke-width="0.8"/><path d="M0.3 1.3L7.5 0V12L0.3 10.7Z" fill="#1d5bb2"/><path d="M1.5 3.8L2.6 8.3L3.9 5.3L5.2 8.3L6.3 3.8" fill="none" stroke="#fff" stroke-width="0.9"/></svg>
<div class="t" style="left:122.90px;top:597.29px;font-size:11px;letter-spacing:-0.398px;color:#1a66cc;font-weight:bold">REL0000000023</div>
<div class="t" style="left:235.20px;top:597.29px;font-size:11px;letter-spacing:-0.452px;color:#47505b">REL0000000023</div>
<div class="t" style="left:348.00px;top:597.29px;font-size:11px;letter-spacing:-0.721px;color:#1a66cc;font-weight:bold">Benson, Robert</div>
<div class="t" style="left:460.10px;top:597.29px;font-size:11px;letter-spacing:-0.145px;color:#47505b">3/13/2018, 8:33 AM</div>
<div class="t" style="left:572.80px;top:597.29px;font-size:11px;letter-spacing:-0.468px;color:#47505b">Edoc</div>
<div class="t" style="left:666.60px;top:597.29px;font-size:11px;letter-spacing:-0.542px;color:#47505b">EN032805.MSG</div>
<div class="hl" style="left:4px;top:619.2px;width:1095px"></div>
<div class="t" style="left:18.70px;top:626.39px;font-size:11px;letter-spacing:-0.218px;color:#47505b">24</div>
<div class="cb" style="left:42px;top:626.0px"></div>
<svg class="a" style="left:69px;top:626.0px" width="14" height="14" viewBox="0 0 14 14"><path d="M1.3 12.7L2.1 9.5L9.9 1.7Q11.2 0.6 12.4 1.6Q13.4 2.8 12.3 4.1L4.5 11.9Z" fill="none" stroke="#2569d2" stroke-width="1.1" stroke-linejoin="round"/><path d="M9 2.7L11.3 5M2.1 9.5L4.5 11.9" fill="none" stroke="#2569d2" stroke-width="1"/><path d="M1.3 12.7L1.8 10.8L3.2 12.2Z" fill="#2569d2"/></svg>
<svg class="a" style="left:96.5px;top:626.6px" width="13" height="12" viewBox="0 0 13 12"><rect x="6.2" y="1.2" width="5.6" height="9.6" fill="#fff" stroke="#7aa6da" stroke-width="0.8"/><path d="M7.5 3.2H11M7.5 5.2H11M7.5 7.2H11M7.5 9.1H11" stroke="#8ab0de" stroke-width="0.8"/><path d="M0.3 1.3L7.5 0V12L0.3 10.7Z" fill="#1d5bb2"/><path d="M1.5 3.8L2.6 8.3L3.9 5.3L5.2 8.3L6.3 3.8" fill="none" stroke="#fff" stroke-width="0.9"/></svg>
<div class="t" style="left:122.90px;top:626.39px;font-size:11px;letter-spacing:-0.398px;color:#1a66cc;font-weight:bold">REL0000000024</div>
<div class="t" style="left:235.20px;top:626.39px;font-size:11px;letter-spacing:-0.452px;color:#47505b">REL0000000024</div>
<div class="t" style="left:348.00px;top:626.39px;font-size:11px;letter-spacing:-0.721px;color:#1a66cc;font-weight:bold">Benson, Robert</div>
<div class="t" style="left:460.10px;top:626.39px;font-size:11px;letter-spacing:-0.145px;color:#47505b">3/13/2018, 8:33 AM</div>
<div class="t" style="left:572.80px;top:626.39px;font-size:11px;letter-spacing:-0.468px;color:#47505b">Edoc</div>
<div class="t" style="left:666.60px;top:626.39px;font-size:11px;letter-spacing:-0.542px;color:#47505b">EN032827.MSG</div>
<div class="hl" style="left:4px;top:648.3px;width:1095px"></div>
<div class="t" style="left:18.70px;top:655.49px;font-size:11px;letter-spacing:-0.218px;color:#47505b">25</div>
<div class="cb" style="left:42px;top:655.0px"></div>
<svg class="a" style="left:69px;top:655.0px" width="14" height="14" viewBox="0 0 14 14"><path d="M1.3 12.7L2.1 9.5L9.9 1.7Q11.2 0.6 12.4 1.6Q13.4 2.8 12.3 4.1L4.5 11.9Z" fill="none" stroke="#2569d2" stroke-width="1.1" stroke-linejoin="round"/><path d="M9 2.7L11.3 5M2.1 9.5L4.5 11.9" fill="none" stroke="#2569d2" stroke-width="1"/><path d="M1.3 12.7L1.8 10.8L3.2 12.2Z" fill="#2569d2"/></svg>
<svg class="a" style="left:96.5px;top:655.6px" width="13" height="12" viewBox="0 0 13 12"><rect x="6.2" y="1.2" width="5.6" height="9.6" fill="#fff" stroke="#7aa6da" stroke-width="0.8"/><path d="M7.5 3.2H11M7.5 5.2H11M7.5 7.2H11M7.5 9.1H11" stroke="#8ab0de" stroke-width="0.8"/><path d="M0.3 1.3L7.5 0V12L0.3 10.7Z" fill="#1d5bb2"/><path d="M1.5 3.8L2.6 8.3L3.9 5.3L5.2 8.3L6.3 3.8" fill="none" stroke="#fff" stroke-width="0.9"/></svg>
<div class="t" style="left:122.90px;top:655.49px;font-size:11px;letter-spacing:-0.398px;color:#1a66cc;font-weight:bold">REL0000000025</div>
<div class="t" style="left:235.20px;top:655.49px;font-size:11px;letter-spacing:-0.452px;color:#47505b">REL0000000025</div>
<div class="t" style="left:348.00px;top:655.49px;font-size:11px;letter-spacing:-0.721px;color:#1a66cc;font-weight:bold">Benson, Robert</div>
<div class="t" style="left:460.10px;top:655.49px;font-size:11px;letter-spacing:-0.145px;color:#47505b">3/13/2018, 8:33 AM</div>
<div class="t" style="left:572.80px;top:655.49px;font-size:11px;letter-spacing:-0.468px;color:#47505b">Edoc</div>
<div class="t" style="left:666.60px;top:655.49px;font-size:11px;letter-spacing:-0.542px;color:#47505b">EN032881.MSG</div>
<div class="a" style="left:4px;top:657px;width:1095px;height:8px;background:linear-gradient(rgba(255,255,255,0),rgba(226,231,237,.55))"></div>
<div class="a" style="left:1098.5px;top:592px;width:22.5px;height:73px;background:#fafafa"></div>
<div class="a" style="left:1099px;top:562px;width:22px;height:29px;background:#fff"></div>
<svg class="a" style="left:1102px;top:600px" width="15" height="8" viewBox="0 0 15 8"><path d="M0 8H15L7.5 0Z" fill="#9a9a9a"/></svg>
<div class="a" style="left:1103px;top:637.5px;width:13px;height:25.5px;border-radius:6.5px;background:#8f8f8f"></div>
<div class="a" style="left:1121px;top:494px;width:20px;height:171px;background:#fafafa"></div>
<svg class="a" style="left:1125px;top:502px" width="15" height="8" viewBox="0 0 15 8"><path d="M0 8H15L7.5 0Z" fill="#8f8f8f"/></svg>
<div class="a" style="left:1126px;top:520.5px;width:13.4px;height:145px;border-radius:6.7px 6.7px 0 0;background:#8f8f8f"></div>
<div class="a" style="left:1px;top:665px;width:1140px;height:27px;background:#fff"></div>
<div class="sel" style="left:21px;top:668.4px;width:113px;height:30px"></div>
<div class="t" style="left:28.20px;top:674.89px;font-size:11px;letter-spacing:-0.283px;color:#47505b">All 14,565</div>
<svg class="a" style="left:118.5px;top:679px" width="6" height="3.5" viewBox="0 0 6 3.5"><path d="M0 0H6L3.0 3.5Z" fill="#2b2f36"/></svg>
<div class="a" style="left:141px;top:668.4px;width:67px;height:30px;border:1px solid #1a66cc;border-radius:3px;background:#fff"></div>
<div class="a" style="left:182.5px;top:668.4px;width:1px;height:30px;background:#1a66cc"></div>
<div class="t" style="left:153.80px;top:674.89px;font-size:11px;letter-spacing:-0.489px;color:#1a66cc">Edit</div>
<svg class="a" style="left:189.5px;top:675.5px" width="11" height="7" viewBox="0 0 11 7"><path d="M1 6L5.5 1.2L10 6" fill="none" stroke="#1a66cc" stroke-width="1.1"/></svg>
<div class="a" style="left:216px;top:668.4px;width:82px;height:30px;border:1px solid #1a66cc;border-radius:3px;background:#fff"></div>
<div class="t" style="left:228.10px;top:674.89px;font-size:11px;letter-spacing:-0.544px;color:#1a66cc">Save Search</div>
<div class="t" style="left:1090.40px;top:674.89px;font-size:11px;letter-spacing:-0.291px;color:#47505b">Total: 14,565</div>
</div>
</body></html>
